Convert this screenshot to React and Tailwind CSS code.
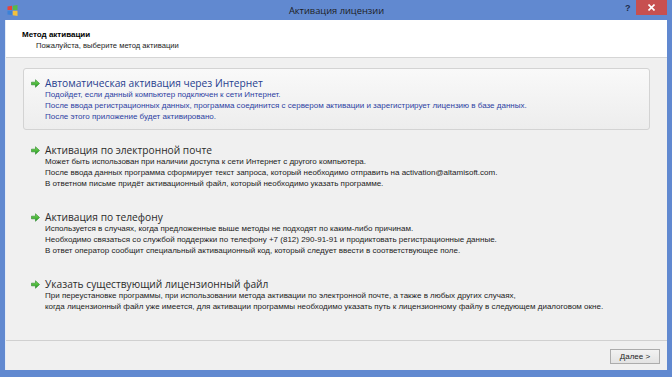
import React from "react";

function Arrow() {
  return (
    <svg width="9" height="9" viewBox="0 0 10 10" className="shrink-0">
      <defs>
        <linearGradient id="ga" x1="0" y1="0" x2="0" y2="1">
          <stop offset="0" stopColor="#7fdc5a" />
          <stop offset="1" stopColor="#1f9a1f" />
        </linearGradient>
      </defs>
      <path d="M0.5 3.5 H5 V0.8 L9.5 5 L5 9.2 V6.5 H0.5 Z" fill="url(#ga)" stroke="#1d7f1d" strokeWidth="0.6" />
    </svg>
  );
}

function Item({ title, lines, selected }) {
  return (
    <div
      className={
        "h-[62px] rounded-[3px] border pl-[7px] pr-2 pt-[8px] " +
        (selected
          ? "border-[#d3d3d3] bg-gradient-to-b from-[#f9f9f9] to-[#ededed]"
          : "border-transparent")
      }
    >
      <div className="flex items-center gap-[5px] h-[12px]">
        <Arrow />
        <span
          className={
            "text-[10.2px] leading-[12px] [font-family:'Open_Sans',sans-serif] " +
            (selected ? "text-[#27418f]" : "text-[#2b2b2b]")
          }
        >
          {title}
        </span>
      </div>
      <div
        className={
          "pl-[14px] text-[8px] leading-[11px] [font-family:'Liberation_Sans',sans-serif] " +
          (selected ? "text-[#2d3fa2]" : "text-[#222]")
        }
      >
        {lines.map((l, i) => (
          <div key={i} className="whitespace-nowrap">{l}</div>
        ))}
      </div>
    </div>
  );
}

export default function App() {
  return (
    <div className="w-[672px] h-[377px] bg-[#6189d0] flex flex-col overflow-hidden [font-family:'Liberation_Sans',sans-serif]">
      <div className="h-[20px] relative flex items-center justify-center shrink-0">
        <svg width="11" height="11" viewBox="0 0 11 11" className="absolute left-[7px] top-[5px]">
          <path d="M0.5 1.5 L5 0.8 V5 H0.5 Z" fill="#e8433a" />
          <path d="M5.8 0.7 L10.5 0 V5 H5.8 Z" fill="#57b947" />
          <path d="M0.5 5.8 H5 V10 L0.5 9.4 Z" fill="#3b82d8" />
          <path d="M5.8 5.8 H10.5 V11 L5.8 10.2 Z" fill="#f5c13c" />
        </svg>
        <span className="text-[9.3px] text-[#1c1c1c] [font-family:'Open_Sans',sans-serif] mt-[1px] ml-[1px]">
          Активация лицензии
        </span>
        <span className="absolute left-[625px] top-[2px] text-[9px] font-bold text-[#1c2c4c]">?</span>
        <div className="absolute left-[636px] top-0 w-[31px] h-[15px] bg-[#c75050] flex items-center justify-center">
          <svg width="7" height="7" viewBox="0 0 7 7">
            <path d="M0.5 0.5 L6.5 6.5 M6.5 0.5 L0.5 6.5" stroke="#fff" strokeWidth="1.6" />
          </svg>
        </div>
      </div>
      <div className="flex-1 mx-[5px] mb-[7px] flex flex-col bg-[#f0f0f0] border-l border-[#e4ecf7]">
        <div className="h-[38px] bg-white border-b border-[#d5d5d5] pl-[16px] pt-[9px] shrink-0">
          <div className="text-[8px] font-bold leading-[11px] text-black">Метод активации</div>
          <div className="text-[7.6px] leading-[11px] pl-[14px] text-[#222]">
            Пожалуйста, выберите метод активации
          </div>
        </div>
        <div className="flex-1 px-[17px] pt-[10px] flex flex-col gap-[5px]">
          <Item
            selected
            title="Автоматическая активация через Интернет"
            lines={[
              "Подойдет, если данный компьютер подключен к сети Интернет.",
              "После ввода регистрационных данных, программа соединится с сервером активации и зарегистрирует лицензию в базе данных.",
              "После этого приложение будет активировано.",
            ]}
          />
          <Item
            title="Активация по электронной почте"
            lines={[
              "Может быть использован при наличии доступа к сети Интернет с другого компьютера.",
              "После ввода данных программа сформирует текст запроса, который необходимо отправить на activation@altamisoft.com.",
              "В ответном письме придёт активационный файл, который необходимо указать программе.",
            ]}
          />
          <Item
            title="Активация по телефону"
            lines={[
              "Используется в случаях, когда предложенные выше методы не подходят по каким-либо причинам.",
              "Необходимо связаться со службой поддержки по телефону +7 (812) 290-91-91 и продиктовать регистрационные данные.",
              "В ответ оператор сообщит специальный активационный код, который следует ввести в соответствующее поле.",
            ]}
          />
          <Item
            title="Указать существующий лицензионный файл"
            lines={[
              "При переустановке программы, при использовании метода активации по электронной почте, а также в любых других случаях,",
              "когда лицензионный файл уже имеется, для активации программы необходимо указать путь к лицензионному файлу в следующем диалоговом окне.",
            ]}
          />
        </div>
        <div className="h-[30px] border-t border-[#d0d0d0] shrink-0 flex justify-end items-start pt-[8px] pr-[7px]">
          <button className="w-[50px] h-[15px] border border-[#acacac] bg-gradient-to-b from-[#f2f2f2] to-[#e3e3e3] text-[8px] leading-[13px] text-[#222] flex items-center justify-center">
            <span><span className="underline">Д</span>алее &gt;</span>
          </button>
        </div>
      </div>
    </div>
  );
}
